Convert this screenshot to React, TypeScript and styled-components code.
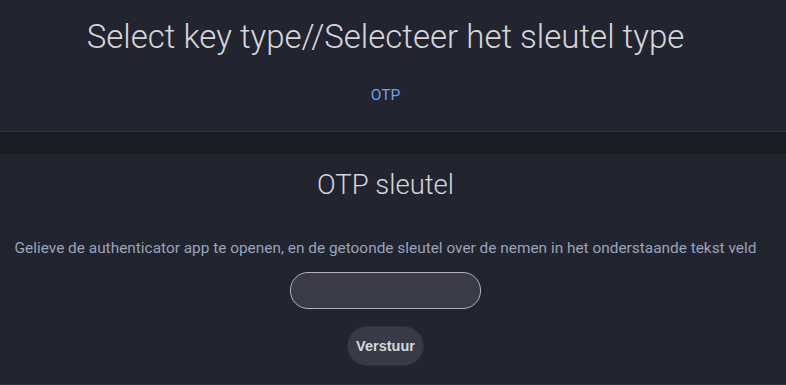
import styled, { createGlobalStyle } from "styled-components";

const GlobalStyle = createGlobalStyle`
  html, body {
    margin: 0;
    padding: 0;
    background: #1b1d25;
    font-family: Roboto, "Noto Sans", sans-serif;
  }
`;

const Page = styled.main`
  display: flex;
  flex-direction: column;
  gap: 22px;
  min-height: 385px;
  background: #1b1d25;
`;

const Panel = styled.section<{ $divider?: boolean }>`
  display: flex;
  flex-direction: column;
  align-items: center;
  padding-right: 15px;
  background: #222530;
  border-bottom: 1px solid ${({ $divider }) => ($divider ? "#2e313c" : "transparent")};
`;

const KeyTypePanel = styled(Panel)`
  height: 132px;
  padding-top: 17px;
  box-sizing: border-box;
`;

const OtpPanel = styled(Panel)`
  flex: 1;
  padding-top: 14px;
  padding-bottom: 17px;
`;

const Title = styled.h1`
  margin: 0;
  font-size: 33px;
  font-weight: 300;
  color: #d4d6dc;
  line-height: 40px;
`;

const SubTitle = styled.h2`
  margin: 0;
  font-size: 27.5px;
  font-weight: 300;
  color: #d4d6dc;
  line-height: 34px;
`;

const TypeLink = styled.a`
  margin-top: 29px;
  font-size: 15.5px;
  color: #6f9ff0;
  text-decoration: none;
  cursor: pointer;
`;

const Hint = styled.p`
  margin: 36px 0 0;
  font-size: 15.4px;
  color: #9aa3bb;
  line-height: 20px;
  white-space: nowrap;
`;

const KeyInput = styled.input`
  margin-top: 14px;
  width: 191px;
  height: 37px;
  box-sizing: border-box;
  border-radius: 18px;
  border: 1px solid #b4b4b8;
  background: #3a3b47;
  color: #e0e0e6;
  padding: 0 14px;
  outline: none;
`;

const SubmitButton = styled.button`
  margin-top: 17px;
  height: 40px;
  padding: 0 8px;
  border-radius: 20px;
  border: 1px solid #2e303b;
  background: #393a47;
  color: #d6d8df;
  font-family: "Liberation Sans", Arial, sans-serif;
  font-weight: 700;
  font-size: 14.5px;
  cursor: pointer;
`;

export default function App() {
  return (
    <>
      <GlobalStyle />
      <Page>
        <KeyTypePanel $divider>
          <Title>Select key type//Selecteer het sleutel type</Title>
          <TypeLink>OTP</TypeLink>
        </KeyTypePanel>
        <OtpPanel $divider>
          <SubTitle>OTP sleutel</SubTitle>
          <Hint>
            Gelieve de authenticator app te openen, en de getoonde sleutel over de nemen in het onderstaande tekst veld
          </Hint>
          <KeyInput type="text" />
          <SubmitButton>Verstuur</SubmitButton>
        </OtpPanel>
      </Page>
    </>
  );
}
